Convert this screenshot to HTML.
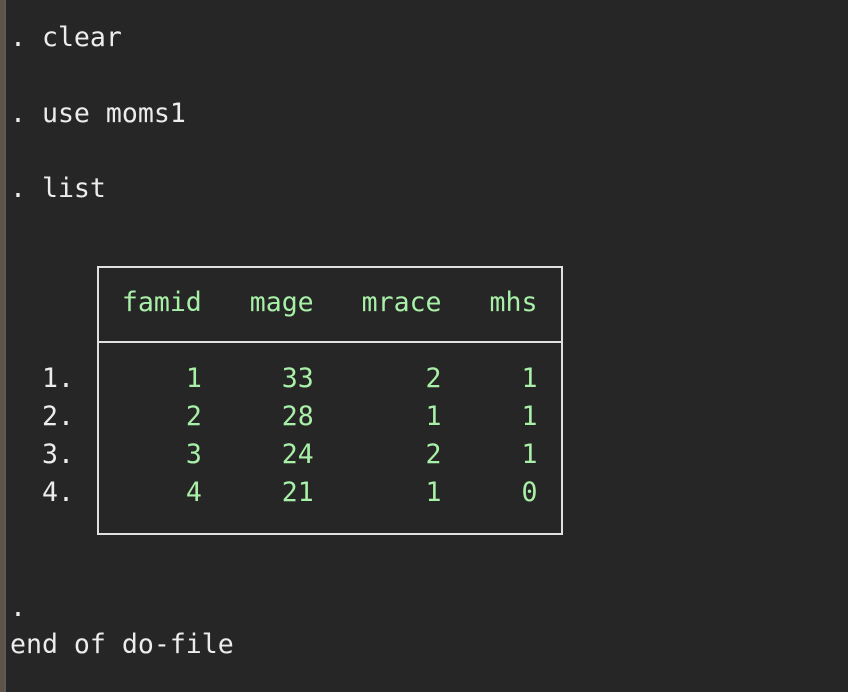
<!DOCTYPE html>
<html><head><style>
body{margin:0;width:848px;height:692px;background:#262626;overflow:hidden;position:relative;font-family:"DejaVu Sans Mono","Liberation Mono",monospace;font-size:26.55px;}
.l{position:absolute;left:10px;line-height:38px;height:38px;white-space:pre;color:#ececec;}
.g{color:#a8f0a8;}
.strip{position:absolute;left:0;top:0;width:4px;height:692px;background:#5e5346;}
.line{position:absolute;left:4px;top:0;width:2px;height:692px;background:#5a5a5a;}
.box{position:absolute;left:97px;top:266px;width:462px;height:265px;border:2px solid #e0e0e0;box-sizing:content-box;}
.div{position:absolute;left:97px;top:341px;width:466px;height:2px;background:#e0e0e0;}
</style></head><body>
<div class="strip"></div><div class="line"></div>
<div class="l" style="top:19px">. clear</div>
<div class="l" style="top:95px">. use moms1</div>
<div class="l" style="top:170px">. list</div>
<div class="box"></div><div class="div"></div>
<div class="l g" style="top:284px">       famid   mage   mrace   mhs</div>
<div class="l" style="top:360px">  1.<span class="g">       1     33       2     1</span></div>
<div class="l" style="top:398px">  2.<span class="g">       2     28       1     1</span></div>
<div class="l" style="top:436px">  3.<span class="g">       3     24       2     1</span></div>
<div class="l" style="top:474px">  4.<span class="g">       4     21       1     0</span></div>
<div class="l" style="top:589px">.</div>
<div class="l" style="top:626px">end of do-file</div>
</body></html>
